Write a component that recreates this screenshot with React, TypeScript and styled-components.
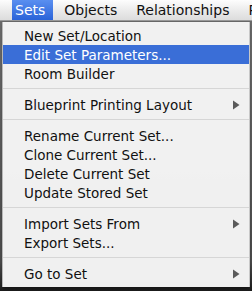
import styled, { createGlobalStyle } from 'styled-components';

const GlobalStyle = createGlobalStyle`
  html, body {
    margin: 0;
    padding: 0;
    background: #2b2b2b;
    overflow: hidden;
  }
  body {
    font-family: 'DejaVu Sans', 'Liberation Sans', sans-serif;
  }
`;

type Entry =
  | { kind: 'item'; label: string; active?: boolean; submenu?: boolean }
  | { kind: 'sep' };

const entries: Entry[] = [
  { kind: 'item', label: 'New Set/Location' },
  { kind: 'item', label: 'Edit Set Parameters...', active: true },
  { kind: 'item', label: 'Room Builder' },
  { kind: 'sep' },
  { kind: 'item', label: 'Blueprint Printing Layout', submenu: true },
  { kind: 'sep' },
  { kind: 'item', label: 'Rename Current Set...' },
  { kind: 'item', label: 'Clone Current Set...' },
  { kind: 'item', label: 'Delete Current Set' },
  { kind: 'item', label: 'Update Stored Set' },
  { kind: 'sep' },
  { kind: 'item', label: 'Import Sets From', submenu: true },
  { kind: 'item', label: 'Export Sets...' },
  { kind: 'sep' },
  { kind: 'item', label: 'Go to Set', submenu: true },
];

const topItems = ['Sets', 'Objects', 'Relationships', 'Po'];

const SubArrow = () => (
  <svg width="8" height="10" viewBox="0 0 8 10">
    <path d="M1 0.5 L7.5 5 L1 9.5 Z" fill="#5a5a5a" />
  </svg>
);

const App = () => {
  return (
    <Screen>
      <GlobalStyle />
      <MenuBar>
        {topItems.map((t, i) => (
          <TopItem key={t} $open={i === 0}>
            {t}
          </TopItem>
        ))}
      </MenuBar>
      <Dropdown>
        {entries.map((e, i) =>
          e.kind === 'sep' ? (
            <Separator key={i} />
          ) : (
            <Item key={i} $active={e.active}>
              <span>{e.label}</span>
              {e.submenu && <SubArrow />}
            </Item>
          )
        )}
      </Dropdown>
    </Screen>
  );
};

export default App;

const Screen = styled.div`
  width: 252px;
  height: 291px;
  display: flex;
  flex-direction: column;
  background: linear-gradient(180deg, #6d6d6d 0%, #4a4a4a 90%, #1c1c1c 100%);
`;

const MenuBar = styled.div`
  height: 21px;
  display: flex;
  align-items: stretch;
  padding-left: 12px;
  overflow: hidden;
  background: linear-gradient(180deg, #fdfdfd 0%, #eaeaea 55%, #dcdcdc 100%);
  border-bottom: 1px solid #9a9a9a;
  box-sizing: border-box;
`;

const TopItem = styled.div<{ $open?: boolean }>`
  display: flex;
  align-items: center;
  flex-shrink: 0;
  padding: 0 8px 0 3px;
  margin-right: 8px;
  font-size: 14px;
  color: ${(p) => (p.$open ? '#ffffff' : '#111111')};
  background: ${(p) =>
    p.$open ? 'linear-gradient(180deg, #5a8ff0 0%, #2a63d8 100%)' : 'transparent'};
  white-space: nowrap;
`;

const Dropdown = styled.div`
  margin: 1px 3px 0 3px;
  padding: 4px 0 4px;
  background: rgba(244, 244, 244, 0.98);
  box-shadow: -1px 0 0 #b8b8b8, 1px 0 0 #c8c8c8, 0 2px 3px rgba(0, 0, 0, 0.4);
  display: flex;
  flex-direction: column;
`;

const Item = styled.div<{ $active?: boolean }>`
  height: 19px;
  display: flex;
  align-items: center;
  justify-content: space-between;
  padding: 0 9px 0 21px;
  font-size: 13.5px;
  color: ${(p) => (p.$active ? '#ffffff' : '#111111')};
  background: ${(p) => (p.$active ? '#3a6ed7' : 'transparent')};
  white-space: nowrap;
`;

const Separator = styled.div`
  height: 1px;
  margin: 5px 0 6px;
  background: #d6d6d6;
`;
